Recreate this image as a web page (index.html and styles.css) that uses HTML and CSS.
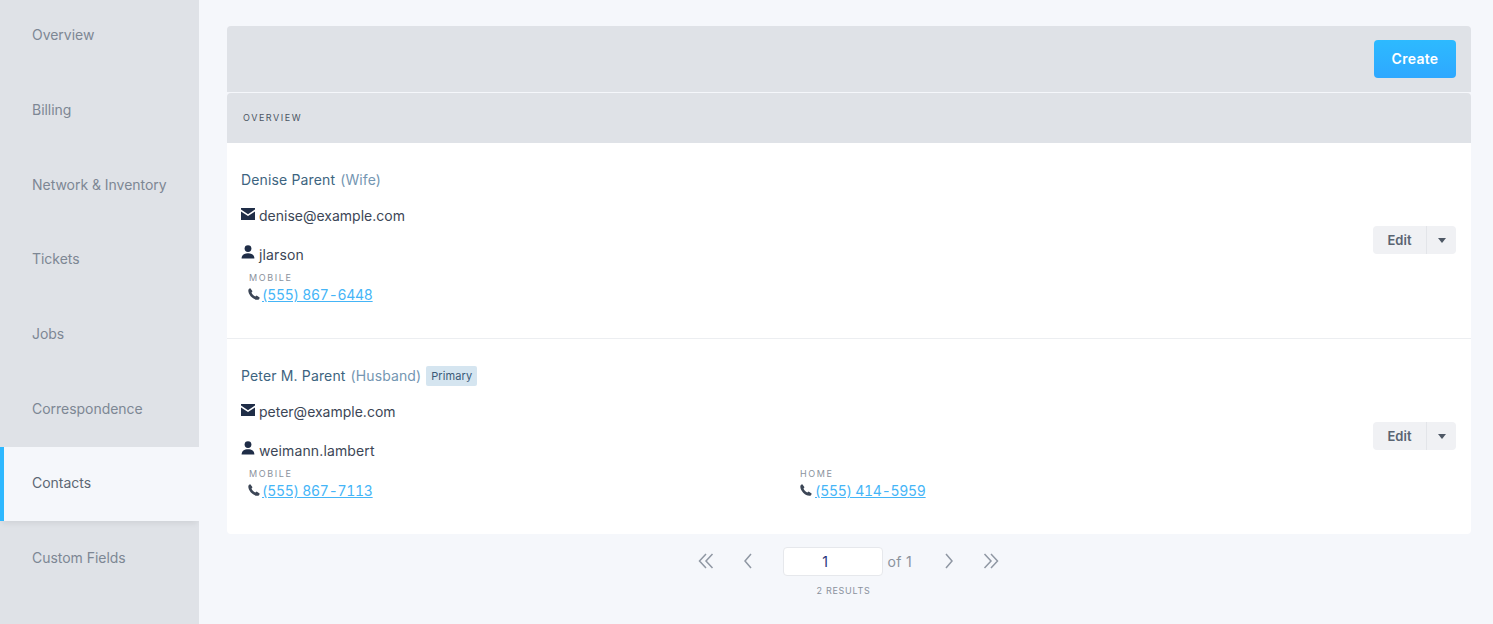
FILE: index.html
```html
<!DOCTYPE html>
<html lang="en">
<head>
<meta charset="utf-8">
<title>Contacts</title>
<link rel="stylesheet" href="styles.css">
</head>
<body>
<svg class="defs" width="0" height="0" aria-hidden="true">
  <symbol id="mail" viewBox="0 0 14 12"><path d="M0 0h14v1.600L7 6.200 0 1.600zM0 3.600l7 4.500 7-4.500V12H0z"/></symbol>
  <symbol id="user" viewBox="0 0 14 14"><circle cx="7" cy="3.600" r="3.400"/><path d="M0.600 13.600c0-3.600 2.600-5.400 6.400-5.400s6.400 1.800 6.400 5.400z"/></symbol>
  <symbol id="phone" viewBox="0 0 12 12"><path d="M2.300.3 4.500 3.300 3.500 4.500C4 6 5.500 7.700 7.300 8.500L8.600 7.500l3 1.900c.2 1.200-.8 2.300-2 2.400C5 11.900.4 6.800.3 2.800.3 1.500 1.200.5 2.300.3z"/></symbol>
</svg>
<div class="layout">
  <nav class="sidebar">
    <a class="nav-item">Overview</a>
    <a class="nav-item">Billing</a>
    <a class="nav-item">Network &amp; Inventory</a>
    <a class="nav-item">Tickets</a>
    <a class="nav-item">Jobs</a>
    <a class="nav-item">Correspondence</a>
    <a class="nav-item active">Contacts</a>
    <a class="nav-item">Custom Fields</a>
  </nav>
  <main class="main">
    <div class="toolbar"><button class="btn-create">Create</button></div>
    <div class="section-head">OVERVIEW</div>
    <div class="list">
      <article class="contact">
        <div class="info">
          <div class="name-row"><span class="name">Denise Parent</span><span class="rel">(Wife)</span></div>
          <div class="line email-line"><svg class="ic-mail"><use href="#mail"/></svg><span>denise@example.com</span></div>
          <div class="line user-line"><svg class="ic-user"><use href="#user"/></svg><span>jlarson</span></div>
          <div class="phones">
            <div class="phone"><div class="phone-label">MOBILE</div><div class="phone-num"><svg class="ic-phone"><use href="#phone"/></svg><a>(555) 867-6448</a></div></div>
          </div>
        </div>
        <div class="split"><span class="split-main">Edit</span><span class="split-caret"><i class="caret"></i></span></div>
      </article>
      <article class="contact second">
        <div class="info">
          <div class="name-row"><span class="name">Peter M. Parent</span><span class="rel">(Husband)</span><span class="badge">Primary</span></div>
          <div class="line email-line"><svg class="ic-mail"><use href="#mail"/></svg><span>peter@example.com</span></div>
          <div class="line user-line"><svg class="ic-user"><use href="#user"/></svg><span>weimann.lambert</span></div>
          <div class="phones">
            <div class="phone"><div class="phone-label">MOBILE</div><div class="phone-num"><svg class="ic-phone"><use href="#phone"/></svg><a>(555) 867-7113</a></div></div>
            <div class="phone"><div class="phone-label">HOME</div><div class="phone-num"><svg class="ic-phone"><use href="#phone"/></svg><a>(555) 414-5959</a></div></div>
          </div>
        </div>
        <div class="split"><span class="split-main">Edit</span><span class="split-caret"><i class="caret"></i></span></div>
      </article>
    </div>
    <div class="pager">
      <div class="pager-row">
        <svg class="pg pg-first" viewBox="0 0 16 16"><path d="M8 1 1.500 8 8 15M14.500 1 8 8l6.500 7"/></svg>
        <svg class="pg pg-prev" viewBox="0 0 16 16"><path d="M11 1 5 8l6 7"/></svg>
        <div class="pg-input">1</div>
        <span class="pg-of">of 1</span>
        <svg class="pg pg-next" viewBox="0 0 16 16"><path d="m5 1 6 7-6 7"/></svg>
        <svg class="pg pg-last" viewBox="0 0 16 16"><path d="M1.500 1 8 8l-6.500 7M8 1l6.500 7L8 15"/></svg>
      </div>
      <div class="results">2 RESULTS</div>
    </div>
  </main>
</div>
</body>
</html>
```
FILE: styles.css
```css
* { box-sizing: border-box; }
html, body { margin: 0; height: 624px; overflow: hidden; }
body { background: #f5f7fb; font-family: "Inter", "Noto Sans", sans-serif; font-size: 14px; color: #2f3a4a; }
.defs { position: absolute; }
.layout { display: flex; height: 624px; }
.sidebar { width: 199px; flex: none; background: #dfe2e7; display: flex; flex-direction: column; overflow: hidden; }
.nav-item { flex: none; height: 74.7px; display: flex; align-items: center; padding: 0 0 2px 32px; color: #7d8794; font-size: 14px; letter-spacing: -0.03px; }
.nav-item:first-child { margin-top: -1.6px; }
.nav-item.active { background: #f5f7fb; color: #5d6774; border-left: 4px solid #2eb8ff; padding-left: 28px; box-shadow: 0 4px 6px -2px rgba(0,0,0,.08); }
.main { flex: none; width: 1244px; margin-left: 28px; padding-top: 26px; }
.toolbar { height: 66px; background: #dfe2e7; border-radius: 4px 4px 0 0; display: flex; justify-content: flex-end; align-items: center; padding-right: 15px; }
.btn-create { width: 82px; height: 38px; padding: 0 0 2px; border: 0; border-radius: 4px; background: linear-gradient(#2dbaff, #2ea8ff); color: #fff; font: 600 14px "Inter", sans-serif; letter-spacing: .3px; }
.section-head { margin-top: 1px; height: 50px; background: #dfe2e7; border-radius: 4px 4px 0 0; display: flex; align-items: center; padding: 0 0 2px 16px; font-size: 9px; letter-spacing: 1.55px; color: #4b5563; }
.list { background: #fff; border-radius: 0 0 4px 4px; }
.contact { height: 196px; display: flex; align-items: center; justify-content: space-between; padding: 0 15px 0 14px; border-bottom: 1px solid #eceef1; }
.contact.second { border-bottom: 0; height: 195px; }
.info { flex: 1; align-self: flex-start; padding-top: 26px; }
.name-row { display: flex; align-items: center; height: 20px; }
.name { color: #3d6480; font-size: 14px; letter-spacing: .15px; }
.rel { color: #7496b2; font-size: 14px; margin-left: 5px; letter-spacing: .1px; }
.badge { margin: 1px 0 0 5px; height: 20px; padding: 0 5px; background: #d5e5f0; border-radius: 2px; color: #3a5a78; font-size: 11px; letter-spacing: .1px; display: flex; align-items: center; }
.line { display: flex; align-items: center; height: 20px; color: #3c4656; font-size: 14px; }
.email-line { margin-top: 16px; }
.user-line { margin-top: 19px; letter-spacing: .12px; }
.ic-mail { width: 14px; height: 12px; margin-right: 4px; margin-top: -3px; fill: #1f2d47; }
.ic-user { width: 14px; height: 14px; margin-right: 4px; margin-top: -4px; fill: #1f2d47; }
.phones { display: grid; grid-template-columns: 551px 300px; padding-left: 8px; }
.phone-label { font-size: 9px; letter-spacing: 1.6px; color: #8a929d; margin-top: 9px; height: 10px; line-height: 10px; }
.phone-num { display: flex; align-items: center; margin-top: 2px; height: 18px; }
.ic-phone { width: 12px; height: 12px; margin-left: -1px; margin-right: 2px; fill: #3c4656; }
.phone + .phone .ic-phone { margin-left: 0; margin-right: 3px; }
.phone-num a { color: #45b5f7; text-decoration: underline; font-size: 14px; font-variant-numeric: tabular-nums; letter-spacing: -.28px; }
.split { display: flex; height: 28px; margin-bottom: 1px; border-radius: 4px; background: #f0f1f4; color: #5a6472; font-size: 13px; font-weight: 600; overflow: hidden; }
.split-main { width: 53px; display: flex; align-items: center; justify-content: center; }
.split-caret { width: 30px; border-left: 1px solid #e3e5e9; display: flex; align-items: center; justify-content: center; }
.caret { width: 0; height: 0; border: 4px solid transparent; border-top: 5px solid #4e5865; border-bottom: 0; }
.pager { display: flex; flex-direction: column; align-items: center; }
.pager-row { display: flex; align-items: center; margin-top: 13px; height: 29px; }
.pg { width: 16px; height: 16px; margin-top: -2px; fill: none; stroke: #8f97a3; stroke-width: 1.5; }
.pg-first { margin-right: 26px; }
.pg-prev { margin-right: 27px; }
.pg-input { width: 100px; height: 29px; padding-right: 15px; background: #fff; border: 1px solid #e6e8ec; border-radius: 4px; display: flex; align-items: center; justify-content: center; color: #26327a; font-size: 14px; }
.pg-of { margin-left: 5px; color: #8a929d; font-size: 14px; letter-spacing: .3px; width: 28px; }
.pg-next { margin-left: 25px; margin-right: 26px; }
.pg-last { margin-right: 2px; }
.results { margin: 9px 11px 0 0; font-size: 9px; letter-spacing: .7px; color: #8a929d; }
```
